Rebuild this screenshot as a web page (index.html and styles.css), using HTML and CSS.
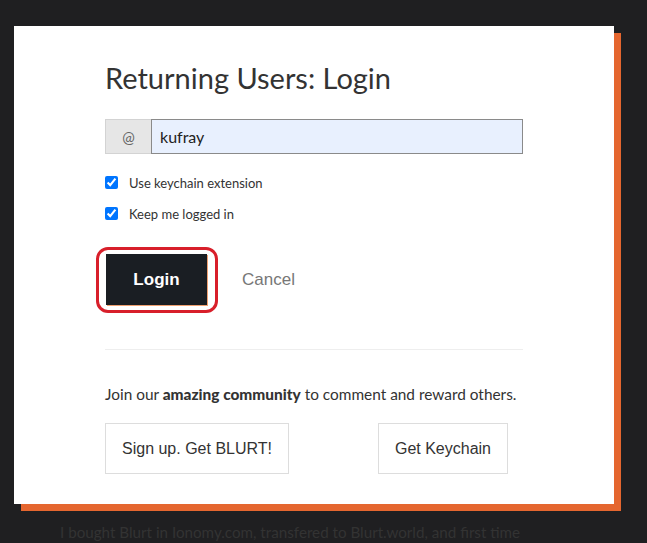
FILE: index.html
```html
<!DOCTYPE html>
<html lang="en">
<head>
    <meta charset="UTF-8">
    <meta name="viewport" content="width=device-width, initial-scale=1.0">
    <title>Returning Users: Login</title>
    <link rel="stylesheet" href="styles.css">
</head>
<body>
    <div class="modal">
        <h3 class="title">Returning Users: Login</h3>

        <div class="input-group">
            <span class="addon">@</span>
            <input type="text" class="username" value="kufray" spellcheck="true">
        </div>

        <label class="check"><input type="checkbox" checked> Use keychain extension</label>
        <label class="check"><input type="checkbox" checked> Keep me logged in</label>

        <div class="actions">
            <span class="highlight">
                <button class="btn-login">Login</button>
            </span>
            <button class="btn-cancel">Cancel</button>
        </div>

        <hr class="divider">

        <p class="join">Join our <strong>amazing community</strong> to comment and reward others.</p>

        <div class="links">
            <a class="btn-outline" href="#">Sign up. Get BLURT!</a>
            <a class="btn-outline" href="#">Get Keychain</a>
        </div>
    </div>

    <p class="post-text">I bought Blurt in Ionomy.com, transfered to Blurt.world, and first time</p>
</body>
</html>
```

FILE: styles.css
```css
body {
    margin: 0;
    padding: 26px 0 0 0;
    background-color: #1f1f21;
    font-family: Lato, "Open Sans", sans-serif;
    overflow: hidden;
}
.modal {
    margin-left: 14px;
    width: 600px;
    height: 478px;
    box-sizing: border-box;
    padding: 34px 91px 0 91px;
    background-color: #fff;
    box-shadow: 7px 7px 0 #e5662f;
}
.title {
    margin: 0 0 23px 0;
    font-size: 29px;
    font-weight: 400;
    color: #333;
    line-height: 36px;
}
.input-group {
    display: flex;
    height: 35px;
    margin-bottom: 13px;
}
.addon {
    width: 45px;
    display: flex;
    align-items: center;
    justify-content: center;
    background-color: #e6e6e6;
    border: 1px solid #d3d3d3;
    border-right: none;
    color: #666;
    font-size: 15px;
}
.username {
    flex: 1;
    margin: 0;
    padding: 0 8px;
    border: 1px solid #8a8a8a;
    background-color: #e8f0fe;
    font-family: inherit;
    font-size: 16px;
    color: #222;
    outline: none;
}
.check {
    display: flex;
    align-items: center;
    height: 31px;
    font-size: 13px;
    color: #333;
}
.check input {
    margin: 0 11px 0 0;
    width: 13px;
    height: 13px;
    accent-color: #0075ff;
}
.actions {
    display: flex;
    align-items: center;
    margin-top: 18px;
    gap: 24px;
}
.highlight {
    display: block;
    padding: 4px 8px 5px 7px;
    margin-left: -9px;
    border: 3px solid #d81f2a;
    border-radius: 12px;
}
.btn-login {
    display: block;
    width: 101px;
    height: 51px;
    padding: 0;
    border: none;
    background-color: #1a1e23;
    box-shadow: 1px 1px 0 #f0a070;
    color: #fff;
    font-family: "Liberation Sans", Arial, sans-serif;
    font-weight: bold;
    font-size: 17px;
}
.btn-cancel {
    padding: 0;
    border: none;
    background: none;
    color: #777;
    font-family: "Liberation Sans", Arial, sans-serif;
    font-size: 17px;
}
.divider {
    margin: 36px 0 0 0;
    border: none;
    border-top: 1px solid #eee;
}
.join {
    margin: 35px 0 20px 0;
    font-size: 15.4px;
    color: #333;
}
.join strong {
    font-weight: 900;
}
.links {
    display: flex;
    justify-content: space-between;
    padding-right: 15px;
}
.btn-outline {
    display: flex;
    align-items: center;
    height: 49px;
    padding: 0 16px;
    border: 1px solid #ddd;
    color: #333;
    text-decoration: none;
    font-family: "Liberation Sans", Arial, sans-serif;
    font-size: 16px;
}
.post-text {
    margin: 19px 0 0 60px;
    font-size: 15.2px;
    color: #333;
}
```
